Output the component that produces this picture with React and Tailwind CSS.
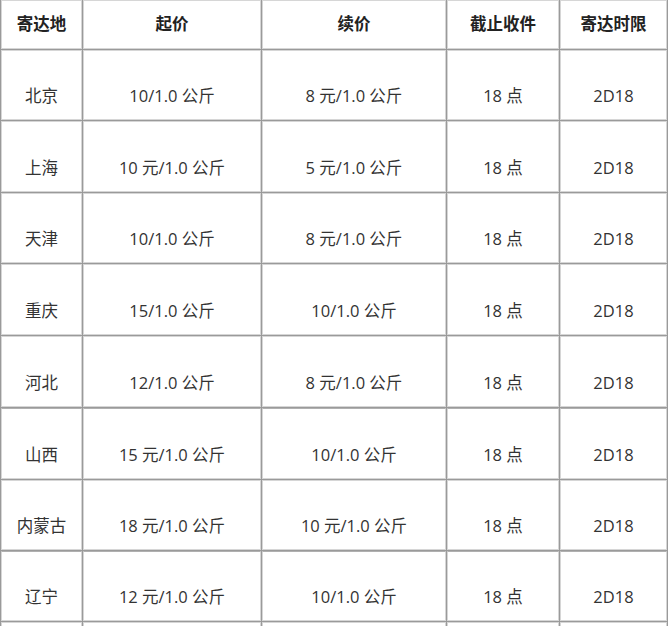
const rows = [
    { place: '北京', start: '10/1.0 公斤', next: '8 元/1.0 公斤', h: 'h-[70px]' },
    { place: '上海', start: '10 元/1.0 公斤', next: '5 元/1.0 公斤', h: 'h-[71px]' },
    { place: '天津', start: '10/1.0 公斤', next: '8 元/1.0 公斤', h: 'h-[70px]' },
    { place: '重庆', start: '15/1.0 公斤', next: '10/1.0 公斤', h: 'h-[71px]' },
    { place: '河北', start: '12/1.0 公斤', next: '8 元/1.0 公斤', h: 'h-[71px]' },
    { place: '山西', start: '15 元/1.0 公斤', next: '10/1.0 公斤', h: 'h-[71px]', thick: true },
    { place: '内蒙古', start: '18 元/1.0 公斤', next: '10 元/1.0 公斤', h: 'h-[70px]' },
    { place: '辽宁', start: '12 元/1.0 公斤', next: '10/1.0 公斤', h: 'h-[70px]', thick: true },
];

const cols = ['w-[81px]', 'w-[178px]', 'w-[184px]', 'w-[112px]', 'w-[107px]'];

const App = () => {
    return (
        <div className="bg-white w-[671px] h-[626px] overflow-hidden font-['Open_Sans','Noto_Sans_CJK_SC',sans-serif] text-[16.5px] text-[#333]">
            <table className="border-separate border-spacing-[1px] bg-[#9a9a9a] -mt-[1px]">
                <thead>
                    <tr>
                        {['寄达地', '起价', '续价', '截止收件', '寄达时限'].map((t, i) => (
                            <th key={t} className={`${cols[i]} h-[49px] bg-white border border-[#d6d6d6] font-bold text-[#222] text-center align-middle p-0`}>
                                {t}
                            </th>
                        ))}
                    </tr>
                </thead>
                <tbody>
                    {rows.map(r => (
                        <tr key={r.place}>
                            {[r.place, r.start, r.next, '18 点', '2D18'].map((v, i) => (
                                <td
                                    key={i}
                                    className={`${cols[i]} ${r.h} bg-white border border-[#d6d6d6] ${r.thick ? 'border-t-[#b0b0b0]' : ''} text-center align-bottom p-0 pb-[11px] leading-[24px] whitespace-nowrap`}
                                >
                                    {v}
                                </td>
                            ))}
                        </tr>
                    ))}
                    {/* next row, cut off by the window */}
                    <tr>
                        {cols.map((w, i) => (
                            <td key={i} className={`${w} h-[70px] bg-white border border-[#d6d6d6] p-0`}></td>
                        ))}
                    </tr>
                </tbody>
            </table>
        </div>
    );
};

export default App;
